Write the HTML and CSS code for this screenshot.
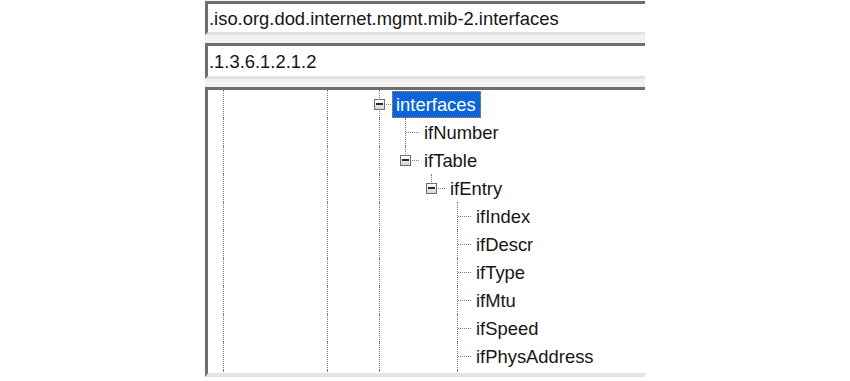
FILE: index.html
```html
<!DOCTYPE html>
<html lang="en">
<head>
    <meta charset="UTF-8">
    <meta name="viewport" content="width=device-width, initial-scale=1.0">
    <title>MIB Browser</title>
    <link rel="stylesheet" href="styles.css">
</head>
<body>
    <div class="panel">
        <!-- Name / OID fields -->
        <div class="field">.iso.org.dod.internet.mgmt.mib-2.interfaces</div>
        <div class="field">.1.3.6.1.2.1.2</div>

        <!-- MIB tree -->
        <div class="tree">
            <div class="row">
                <span class="cell v"></span><span class="cell"></span><span class="cell"></span><span class="cell"></span>
                <span class="cell v"></span><span class="cell"></span>
                <span class="cell v h"><span class="toggle"></span></span>
                <span class="label selected">interfaces</span>
            </div>
            <div class="row">
                <span class="cell v"></span><span class="cell"></span><span class="cell"></span><span class="cell"></span>
                <span class="cell v"></span><span class="cell"></span><span class="cell v"></span>
                <span class="cell v h"></span>
                <span class="label">ifNumber</span>
            </div>
            <div class="row">
                <span class="cell v"></span><span class="cell"></span><span class="cell"></span><span class="cell"></span>
                <span class="cell v"></span><span class="cell"></span><span class="cell v"></span>
                <span class="cell v elbow h"><span class="toggle"></span></span>
                <span class="label">ifTable</span>
            </div>
            <div class="row">
                <span class="cell v"></span><span class="cell"></span><span class="cell"></span><span class="cell"></span>
                <span class="cell v"></span><span class="cell"></span><span class="cell v"></span><span class="cell"></span>
                <span class="cell v elbow h"><span class="toggle"></span></span>
                <span class="label">ifEntry</span>
            </div>
            <div class="row">
                <span class="cell v"></span><span class="cell"></span><span class="cell"></span><span class="cell"></span>
                <span class="cell v"></span><span class="cell"></span><span class="cell v"></span><span class="cell"></span><span class="cell"></span>
                <span class="cell v h"></span>
                <span class="label">ifIndex</span>
            </div>
            <div class="row">
                <span class="cell v"></span><span class="cell"></span><span class="cell"></span><span class="cell"></span>
                <span class="cell v"></span><span class="cell"></span><span class="cell v"></span><span class="cell"></span><span class="cell"></span>
                <span class="cell v h"></span>
                <span class="label">ifDescr</span>
            </div>
            <div class="row">
                <span class="cell v"></span><span class="cell"></span><span class="cell"></span><span class="cell"></span>
                <span class="cell v"></span><span class="cell"></span><span class="cell v"></span><span class="cell"></span><span class="cell"></span>
                <span class="cell v h"></span>
                <span class="label">ifType</span>
            </div>
            <div class="row">
                <span class="cell v"></span><span class="cell"></span><span class="cell"></span><span class="cell"></span>
                <span class="cell v"></span><span class="cell"></span><span class="cell v"></span><span class="cell"></span><span class="cell"></span>
                <span class="cell v h"></span>
                <span class="label">ifMtu</span>
            </div>
            <div class="row">
                <span class="cell v"></span><span class="cell"></span><span class="cell"></span><span class="cell"></span>
                <span class="cell v"></span><span class="cell"></span><span class="cell v"></span><span class="cell"></span><span class="cell"></span>
                <span class="cell v h"></span>
                <span class="label">ifSpeed</span>
            </div>
            <div class="row">
                <span class="cell v"></span><span class="cell"></span><span class="cell"></span><span class="cell"></span>
                <span class="cell v"></span><span class="cell"></span><span class="cell v"></span><span class="cell"></span><span class="cell"></span>
                <span class="cell v h"></span>
                <span class="label">ifPhysAddress</span>
            </div>
            <!-- guide lines running on past the bottom edge -->
            <div class="row">
                <span class="cell v"></span><span class="cell"></span><span class="cell"></span><span class="cell"></span>
                <span class="cell v"></span><span class="cell"></span><span class="cell v"></span><span class="cell"></span><span class="cell"></span>
                <span class="cell v"></span>
            </div>
        </div>
    </div>
</body>
</html>
```

FILE: styles.css
```css
body {
    margin: 0;
    padding: 0;
    background-color: white;
    font-family: "Liberation Sans", Arial, sans-serif;
    font-size: 18.4px;
    color: #161616;
}

.panel {
    margin-left: 205px;
    width: 440px;
    padding-top: 1px;
    background-color: #f2f2f2;
    display: flex;
    flex-direction: column;
    gap: 8px;
}

.field {
    height: 28px;
    line-height: 29px;
    padding-left: 1px;
    background-color: white;
    border-top: 3px solid #6f6f6f;
    border-left: 3px solid #6f6f6f;
    border-bottom: 3px solid #e2e2e2;
    white-space: nowrap;
    overflow: hidden;
}

.field + .field {
    height: 30px;
    line-height: 31px;
}

.tree {
    height: 283px;
    padding-left: 3px;
    background-color: white;
    border-top: 3px solid #6f6f6f;
    border-left: 3px solid #6f6f6f;
    border-bottom: 4px solid #e4e4e4;
    overflow: hidden;
}

.row {
    display: flex;
    height: 28px;
    align-items: center;
}

.cell {
    flex: none;
    width: 26px;
    height: 28px;
    display: flex;
    align-items: center;
    justify-content: center;
    position: relative;
}

.cell.v::before {
    content: "";
    position: absolute;
    left: 12px;
    top: 0;
    bottom: 0;
    border-left: 1px dotted #7c7c7c;
}

.cell.elbow::before {
    bottom: 50%;
}

.cell.h::after {
    content: "";
    position: absolute;
    left: 13px;
    right: 0;
    top: 14px;
    border-top: 1px dotted #7c7c7c;
}

.toggle {
    position: relative;
    z-index: 1;
    width: 9px;
    height: 9px;
    margin-left: -1px;
    border: 1px solid #6e6e6e;
    background: linear-gradient(#ffffff, #d6d6d6);
    display: flex;
    align-items: center;
    justify-content: center;
}

.toggle::after {
    content: "";
    width: 7px;
    height: 2px;
    background-color: #2a2a2a;
}

.label {
    margin-left: 2px;
    line-height: 25px;
    padding: 0 2px;
    border: 1px solid transparent;
    white-space: nowrap;
}

.label.selected {
    margin-left: -1px;
    padding: 0 4px 0 3px;
    color: white;
    background-color: #0b64d8;
    border: 1px dotted #d9862a;
}
```
